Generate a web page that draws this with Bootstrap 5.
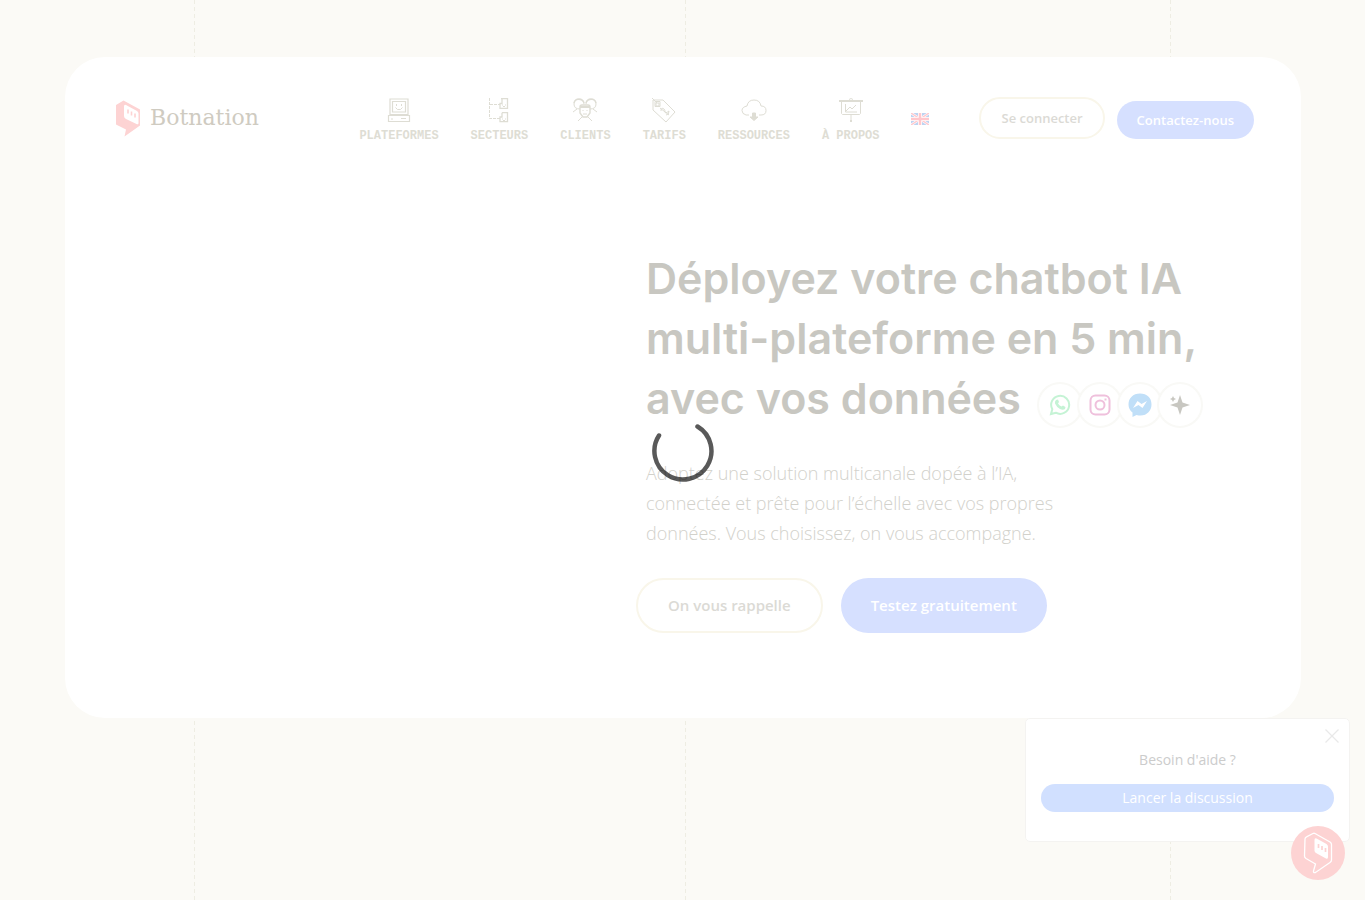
<!DOCTYPE html>
<html lang="fr">
<head>
<meta charset="utf-8">
<meta name="viewport" content="width=device-width, initial-scale=1">
<title>Botnation</title>
<link href="https://cdn.jsdelivr.net/npm/bootstrap@5.3.0/dist/css/bootstrap.min.css" rel="stylesheet">
<style>
  body { background: #fbfaf6; color: #c8c7c1; font-family: "Open Sans", sans-serif; min-height: 100vh; }
  .guides { inset: 0; padding: 0 194px; grid-template-columns: 491fr 486fr; z-index: -1; }
  .guides span { background: repeating-linear-gradient(#eeede3 0 4px, transparent 4px 7px) left / 1px 100% no-repeat; }
  .guides span:last-child { background: repeating-linear-gradient(#eeede3 0 4px, transparent 4px 7px) left / 1px 100% no-repeat, repeating-linear-gradient(#eeede3 0 4px, transparent 4px 7px) right / 1px 100% no-repeat; }
  .shell { padding: 57px 64px 0 65px; }
  .hero { background: #fff; border-radius: 40px; padding: 40px 47px 85px 51px; }
  .brand-name { font: 22px/34px "DejaVu Serif", serif; color: #cfcbc1; }
  .site-nav { gap: 32px; margin-right: 50px; padding-top: 1px; }
  .site-nav a { color: #deddd4; font: 700 12px/16px "Liberation Mono", monospace; text-transform: uppercase; text-decoration: none; }
  .site-nav svg { display: block; margin: 0 auto 5px; }
  .line-icon { fill: none; stroke: #deddd4; stroke-width: 1; }
  .pill { border-radius: 40px; font-weight: 600; white-space: nowrap; }
  .pill-sm { font-size: 13px; line-height: 18px; padding: 10px 20px; }
  .pill-lg { font-size: 15px; line-height: 23px; padding: 14px 30px; }
  .pill-outline, .pill-outline:hover { border: 2px solid #f9f6ea; color: #dbdad5; background: #fff; }
  .pill-blue, .pill-blue:hover { border: 0; background: #d6e0ff; color: #fff; }
  .actions { gap: 18px; }
  .pitch { padding: 104px 0 0 520px; }
  .pitch-text { padding-left: 10px; }
  .pitch h1 { font: 600 43px/60px Inter, sans-serif; margin: 0; color: #c8c7c1; white-space: nowrap; }
  .channels { margin-top: 14px; }
  .channel { width: 46px; height: 46px; border: 2px solid #f9f9f6; border-radius: 50%; background: #fff; margin-right: -6px; }
  .pitch p { font-size: 18px; line-height: 30px; font-weight: 300; color: #d2d1cb; margin: 30px 0; }
  .loader { inset: 0; pointer-events: none; z-index: 1080; }
  .help-box { right: 15px; bottom: 58px; width: 325px; height: 124px; background: #fff; border: 1px solid #f4f3f1; border-radius: 5px; padding: 30px 15px; font-size: 14px; line-height: 22px; color: #cccccc; }
  .help-title { margin-bottom: 13px; }
  .help-box .start { border: 0; border-radius: 14px; background: #d1e0ff; color: #fff; height: 28px; padding: 0; font-size: 14px; line-height: 28px; }
  .help-close { top: 9px; right: 9px; border: 0; background: none; padding: 0; line-height: 0; }
  .help-bot { right: 20px; bottom: 20px; width: 54px; height: 54px; border: 0; border-radius: 50%; padding: 0; background: #fdd3d3; line-height: 0; }
</style>
</head>
<body class="position-relative">
<div class="guides position-absolute d-grid" aria-hidden="true"><span></span><span></span></div>

<div class="shell">
  <main class="hero">
    <header class="d-flex align-items-start">
      <a href="#" class="d-flex align-items-center gap-2 text-decoration-none">
        <svg width="26" height="42" viewBox="0 -3 26 42" aria-hidden="true">
          <path d="M0 5 7.500 0.500 24 9.500V25.500L8.500 36.500 10 29.500 0 24.500Z" fill="#fdd3d3"/>
          <path d="M8 6.500Q8 4 10 5L21 11Q22.500 12 22.500 13.500V23Q22.500 25 20.500 24L10 19Q8 18 8 16Z" fill="#fff"/>
          <path d="M12 9.500v4M15.500 11.500v4M19 13.500v4" stroke="#fdd3d3" stroke-width="1.600"/>
        </svg>
        <span class="brand-name">Botnation</span>
      </a>
      <nav class="site-nav d-flex ms-auto">
        <a href="#"><svg class="line-icon" width="24" height="25" viewBox="0 0 24 25"><path d="M3 1v15.500h18V1zM5.500 3.500h13v10.500h-13zM1.500 17.500h21v6h-21z" stroke-width="1.200"/><path d="M4 21h2M14 20.500h5M9.500 6v2M14.500 6v2M8.500 9.500l2 2h3l2-2"/></svg>Plateformes</a>
        <a href="#"><svg class="line-icon" width="24" height="25" viewBox="0 0 24 25"><path d="M14 .7h6.500v9.600H13V5.500h2V.7M15 14.700h5.500v9H13V19h2v-4.300" stroke-width="1.300"/><path d="M15 7h1M18 7h1M16 8.500h2M15 21h1M18 21h1M16 22.500h2"/><path d="M2.500 0v20.500h11M3 6.500h10" stroke-dasharray="3 1"/></svg>Secteurs</a>
        <a href="#"><svg class="line-icon" width="26" height="25" viewBox="0 0 26 25"><path d="M8 11Q2 11 2 6T7 1.500t5 4.500M18 11q6 0 6-5t-5-4.500T14 6M1 14l4-3M25 14l-4-3M6 23l4-4M20 23l-4-4"/><path d="M2 5q1-4 5-4t5 4M14 5q1-4 5-4t5 4M8 9q0-2 2-2h6q2 0 2 2M8 9v6l3 4h4l3-4V9" stroke-width="1.400"/><path d="M8 9h10" stroke-width="2"/><path d="M11 12v1M15 12v1M11 16h4"/></svg>Clients</a>
        <a href="#"><svg class="line-icon" width="26" height="25" viewBox="0 0 26 25"><path d="M2 2h10l12 12-9 10L2 12zM1 0l5 5M4 3.500h5v5H4zM9 10l9 7M10 13q0-4 3-2 1 1 1 3t4-1q0 4-3 4"/><path d="M5 5h3v3H5z"/></svg>Tarifs</a>
        <a href="#"><svg class="line-icon" width="26" height="25" viewBox="0 0 26 25"><path d="M8 17H5Q1 16 1 12.500T6 8Q7 2 13 2t7 6q5 0 5 4.500T20 17h-2"/><path d="M11.500 15h3v4h2.500L13 22.500 9 19h2.500z" fill="#deddd4"/></svg>Ressources</a>
        <a href="#"><svg class="line-icon" width="26" height="25" viewBox="0 0 26 25"><path d="M3.500 3v12.500l1 1h17l1-1V3M13 17v7M7.500 6v8H19M8 13l4-4 2 2 4-4M11 1.500q2-2 4 0"/><path d="M1 3h24M12 23h2" stroke-width="2"/></svg>À propos</a>
        <a href="#" class="align-self-center" aria-label="English"><svg width="18" height="12" viewBox="0 0 18 12"><path d="M0 0h18v12H0z" fill="#bdd3f1"/><path d="M0 0l18 12M18 0L0 12" stroke="#fff" stroke-width="2.500"/><path d="M0 0l18 12M18 0L0 12" stroke="#ffc7cc" stroke-width="1.400"/><path d="M9 0v12M0 6h18" stroke="#fff" stroke-width="4"/><path d="M9 0v12M0 6h18" stroke="#ffc7cc" stroke-width="2.500"/></svg></a>
      </nav>
      <div class="d-flex gap-2">
        <button type="button" class="btn pill pill-sm pill-outline me-1">Se connecter</button>
        <button type="button" class="btn pill pill-sm pill-blue mt-1">Contactez-nous</button>
      </div>
    </header>

    <section class="pitch">
      <div class="pitch-text">
        <h1>Déployez votre chatbot IA<br>multi-plateforme en 5 min,<br>
          <span class="d-inline-flex align-items-start">avec vos données
            <span class="channels d-inline-flex ms-3">
              <span class="channel d-flex align-items-center justify-content-center"><svg width="22" height="22" viewBox="0 0 22 22"><path d="M2 20l1.300-4.800A9 9 0 1 1 6.800 18.700Z" fill="none" stroke="#c5f3d5" stroke-width="2"/><path d="M7 6l2-.5 1 2.500-1 1.500q1 2 3.500 3l1.500-1 2.500 1.500-.5 2q-2 1.500-5 0-3.500-2-5-5.500-.5-2 1-3.500" fill="#c5f3d5"/></svg></span>
              <span class="channel d-flex align-items-center justify-content-center"><svg width="22" height="22" viewBox="0 0 22 22" fill="none" stroke="#efc0dc" stroke-width="2"><rect x="1.500" y="1.500" width="19" height="19" rx="5"/><circle cx="11" cy="11" r="4.500"/><path d="M15.500 5.500h2"/></svg></span>
              <span class="channel d-flex align-items-center justify-content-center"><svg width="24" height="24" viewBox="0 0 24 24"><path d="M12 .5C5 .5.5 5.200.5 11.500c0 3.500 1.500 6 4 8V24l4-2c9 2.500 15-3.500 15-10.500S19 .5 12 .5" fill="#c0dff8"/><path d="M5 15l4.500-7 4 3L19 8l-4.500 7-4-3Z" fill="#fff"/></svg></span>
              <span class="channel d-flex align-items-center justify-content-center"><svg width="22" height="22" viewBox="0 0 22 22" fill="#c8c7c1"><path d="M11 1l2.500 7.500L21 11l-7.500 2.500L11 21l-2.500-7.500L1 11l7.500-2.500ZM4 2l1 2 2 1-2 1-1 2-1-2-2-1 2-1Z"/></svg></span>
            </span>
          </span>
        </h1>
        <p>Adoptez une solution multicanale dopée à l’IA,<br>connectée et prête pour l’échelle avec vos propres<br>données. Vous choisissez, on vous accompagne.</p>
      </div>
      <div class="actions d-flex">
        <button type="button" class="btn pill pill-lg pill-outline">On vous rappelle</button>
        <button type="button" class="btn pill pill-lg pill-blue">Testez gratuitement</button>
      </div>
    </section>
  </main>
</div>

<aside class="help-box position-fixed text-center">
  <button type="button" class="help-close position-absolute" aria-label="Fermer"><svg width="16" height="16" viewBox="0 0 16 16"><path d="M1.500 1.500l13 13M14.500 1.500l-13 13" stroke="#e9e9e9" stroke-width="1.300"/></svg></button>
  <div class="help-title">Besoin d'aide ?</div>
  <button type="button" class="start d-block w-100">Lancer la discussion</button>
</aside>
<button type="button" class="help-bot position-fixed" aria-label="Ouvrir le chat">
  <svg width="54" height="54" viewBox="0 0 54 54"><path d="M14 13q0-1.500 1.500-2.200L22 7.500q1-.5 2 0L39 16q1.500 1 1.500 2.500V34q0 1.500-1.500 2.500L24.500 46.500q-2.500.5-2-1.500L24.500 38 15 32.500q-1.500-1-1.500-2.500Z" fill="none" stroke="#fff" stroke-width="1.300"/><path d="M23.500 14q0-2.500 2-1.500L35.500 18q1.500 1 1.500 2.500V31q0 2.500-2 1.500L25 27q-1.500-1-1.500-2.500Z" fill="#fff"/><path d="M27.500 18v4M31 20v4M34.500 22v4" stroke="#fdd3d3" stroke-width="1.700"/></svg>
</button>
<div class="loader position-fixed d-flex align-items-center justify-content-center" role="status" aria-label="Chargement">
  <svg width="64" height="64" viewBox="0 0 64 64"><path d="M8 17.500A28.500 28.500 0 1 0 46.500 8.500" fill="none" stroke="#000" stroke-opacity=".65" stroke-width="4.500" stroke-linecap="round"/></svg>
</div>
<script src="https://cdn.jsdelivr.net/npm/bootstrap@5.3.0/dist/js/bootstrap.bundle.min.js"></script>
</body>
</html>
